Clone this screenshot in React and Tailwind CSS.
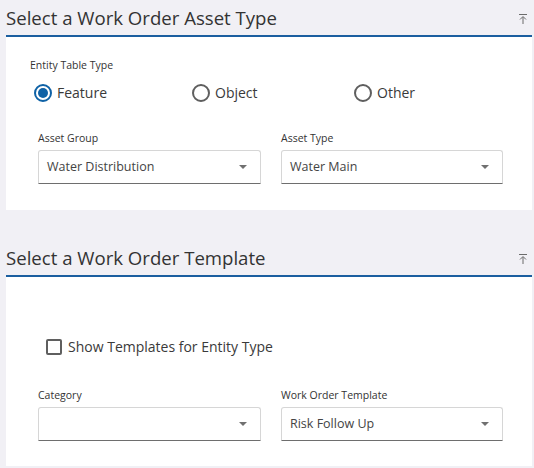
import { useState } from "react";

const CollapseIcon = () => (
    <svg width="10" height="12" viewBox="0 0 10 12" className="text-[#6b6b6b]">
        <path d="M1 1.5h8" stroke="currentColor" strokeWidth="1" fill="none" />
        <path d="M5 11V4M2 6.5 5 3.5l3 3" stroke="currentColor" strokeWidth="1" fill="none" />
    </svg>
);

const Radio = ({ label, checked, onClick, className }) => (
    <button onClick={onClick} className={"flex items-center gap-[5px] h-[20px] " + className}>
        <span
            className={
                "w-[18px] h-[18px] rounded-full border-2 flex items-center justify-center " +
                (checked ? "border-[#0f62a6]" : "border-[#5f5f5f]")
            }
        >
            {checked && <span className="w-[10px] h-[10px] rounded-full bg-[#0f62a6]"></span>}
        </span>
        <span className="text-[14px] text-[#3a3a3a] leading-none">{label}</span>
    </button>
);

const Select = ({ label, value }) => (
    <div>
        <p className="text-[10.5px] leading-[14px] text-[#333] mb-[5px]">{label}</p>
        <div className="h-[34px] border border-[#d6d6d6] border-b-[#6e6e6e] rounded-t-[3px] flex items-center justify-between pl-[8px] pr-[13px] bg-white">
            <span className="text-[12.5px] text-[#444]">{value}</span>
            <svg width="8" height="4" viewBox="0 0 8 4">
                <path d="M0 0h8L4 4z" fill="#707070" />
            </svg>
        </div>
    </div>
);

const Section = ({ title, children, className }) => (
    <div className={"ml-[6px] mr-[2px] " + className}>
        <div className="h-[35px] flex items-center justify-between">
            <h2 className="text-[18.6px] font-medium text-[#333] pt-[1px]">{title}</h2>
            <span className="mr-[4px] mt-[2px]"><CollapseIcon /></span>
        </div>
        <div className="border-t-2 border-[#1b5e9f] bg-white">{children}</div>
    </div>
);

export default function App() {
    let [ entityType, setEntityType ] = useState("Feature");
    let [ showTemplates, setShowTemplates ] = useState(false);

    return (
        <div className="w-[534px] h-[468px] bg-[#f1f0f5] overflow-hidden font-['Open_Sans',sans-serif]">
            <Section title="Select a Work Order Asset Type">
                <div className="h-[173px] pl-[24px] pt-[21px]">
                    <p className="text-[10.5px] leading-[14px] text-[#333]">Entity Table Type</p>
                    <div className="flex mt-[11px] pl-[4px]">
                        {["Feature", "Object", "Other"].map((t, i) => (
                            <Radio
                                key={t}
                                label={t}
                                checked={entityType == t}
                                onClick={() => setEntityType(t)}
                                className={i == 0 ? "w-[158px]" : i == 1 ? "w-[162px]" : ""}
                            />
                        ))}
                    </div>
                    <div className="grid grid-cols-[223px_222px] gap-[20px] pl-[8px] mt-[28px]">
                        <Select label="Asset Group" value="Water Distribution" />
                        <Select label="Asset Type" value="Water Main" />
                    </div>
                </div>
            </Section>

            <Section title="Select a Work Order Template" className="mt-[30px]">
                <div className="h-[189px] pl-[32px] pt-[59px]">
                    <button
                        onClick={() => setShowTemplates(!showTemplates)}
                        className="flex items-center gap-[6px] ml-[8px]"
                    >
                        <span className="w-[16px] h-[16px] border-2 border-[#5f5f5f] rounded-[2px] flex items-center justify-center">
                            {showTemplates && (
                                <svg width="10" height="8" viewBox="0 0 10 8">
                                    <path d="M1 4l3 3 5-6" stroke="#333" strokeWidth="1.6" fill="none" />
                                </svg>
                            )}
                        </span>
                        <span className="text-[14px] text-[#3a3a3a]">Show Templates for Entity Type</span>
                    </button>
                    <div className="grid grid-cols-[223px_222px] gap-[20px] mt-[31px]">
                        <Select label="Category" value="" />
                        <Select label="Work Order Template" value="Risk Follow Up" />
                    </div>
                </div>
            </Section>
        </div>
    );
}
